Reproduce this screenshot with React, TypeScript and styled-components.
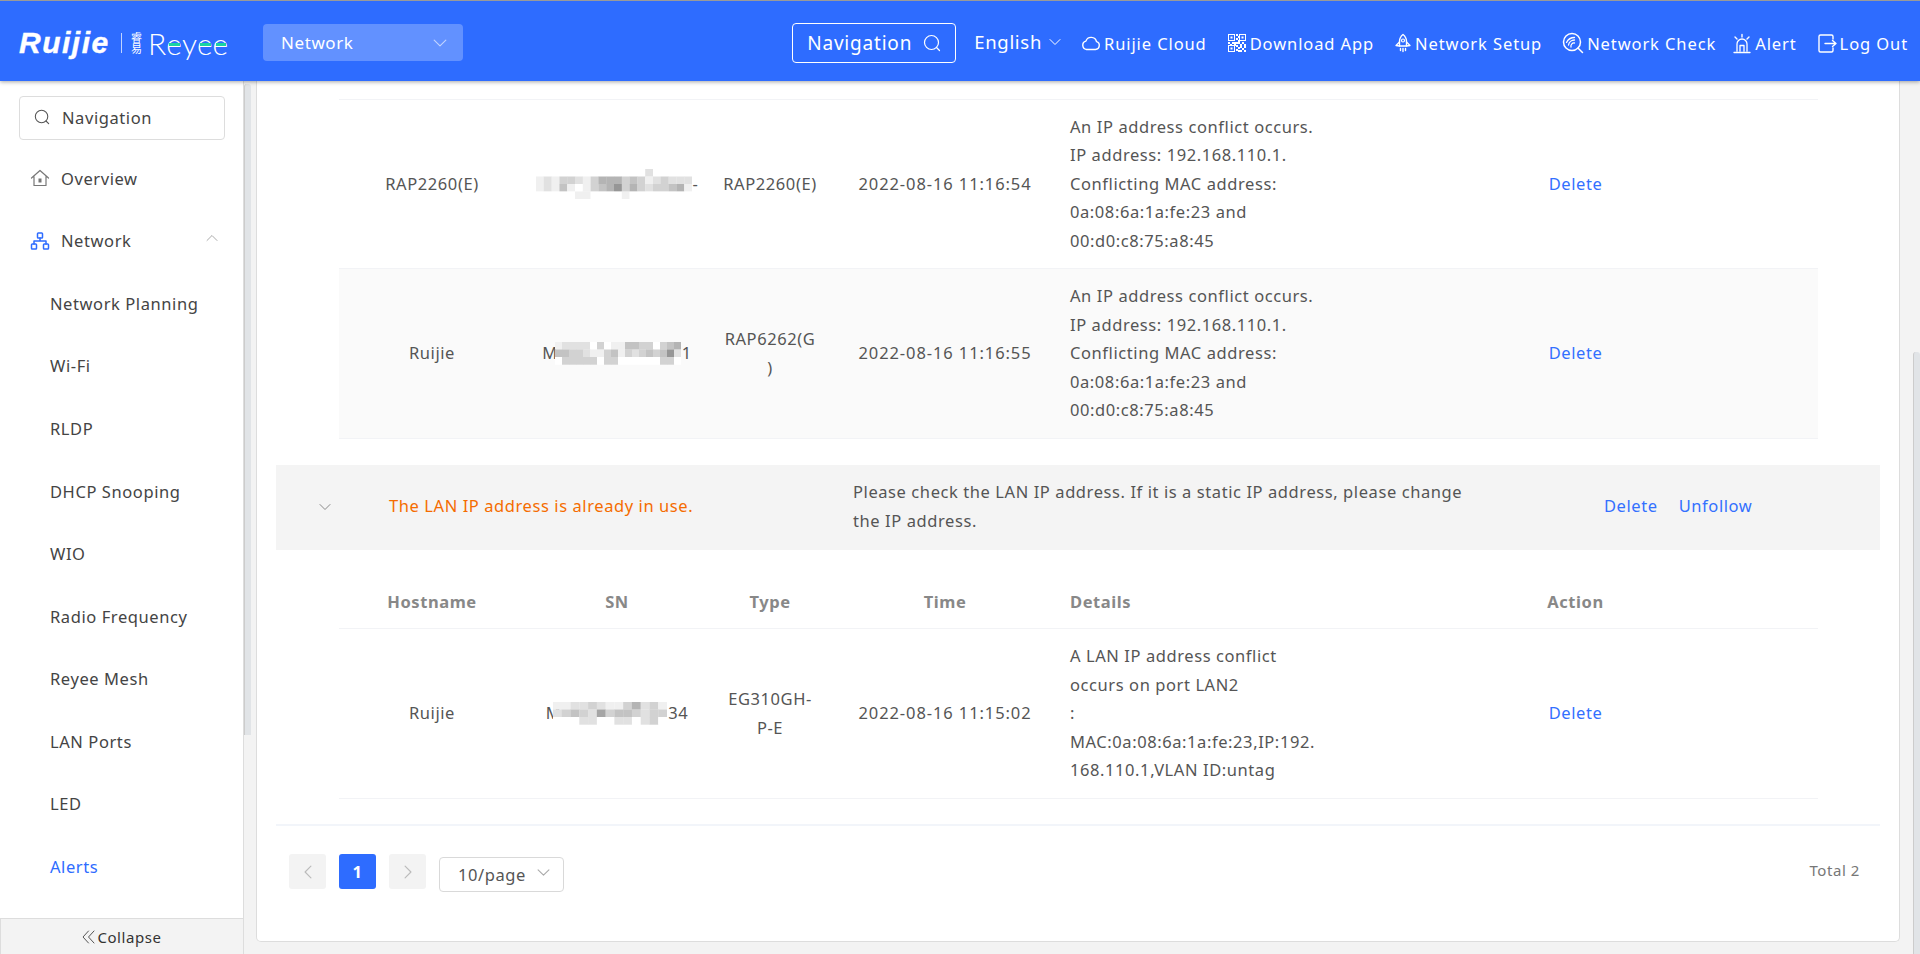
import React from 'react';
import styled, { createGlobalStyle } from 'styled-components';

const GlobalStyle = createGlobalStyle`
  html, body {
    margin: 0;
    height: 100%;
    overflow: hidden;
    background: #f3f3f3;
    font-family: "Noto Sans", "Noto Sans CJK SC", sans-serif;
    font-size: 16.5px;
    letter-spacing: 0.58px;
    color: #555;
  }
  * { box-sizing: border-box; }
`;

const Page = styled.div`
  height: 954px;
  display: flex;
  flex-direction: column;
`;

const Header = styled.header`
  height: 81px;
  flex: none;
  border-top: 1px solid #9a9a9a;
  background: #2e6cff;
  box-shadow: 0 1px 4px rgba(0, 0, 0, 0.35);
  display: flex;
  align-items: center;
  padding: 0 12px 0 19px;
  color: #fff;
  position: relative;
  z-index: 2;
`;

const Logo = styled.div`
  width: 206px;
  display: flex;
  align-items: center;
  flex: none;
  margin-top: 3px;
`;

const LogoRuijie = styled.span`
  flex: none;
  font-family: "Liberation Sans", sans-serif;
  font-weight: 700;
  font-style: italic;
  font-size: 30px;
  letter-spacing: 1.5px;
  line-height: 30px;
  width: 102px;
  -webkit-text-stroke: 0.4px #fff;
`;

const LogoSep = styled.span`
  flex: none;
  width: 1px;
  height: 20px;
  background: rgba(255, 255, 255, 0.7);
  margin-right: 9px;
`;

const LogoCjk = styled.span`
  flex: none;
  display: flex;
  flex-direction: column;
  font-family: "Noto Sans CJK SC", sans-serif;
  font-size: 11px;
  line-height: 11px;
  letter-spacing: 0;
  width: 17px;
`;

const LogoReyee = styled.span`
  flex: none;
  display: flex;
  font-family: "Lato", sans-serif;
  font-weight: 300;
  font-size: 30px;
  line-height: 30px;
  letter-spacing: 0;
`;

const LogoE = styled.span`
  position: relative;
  &::after {
    content: '';
    position: absolute;
    left: 3px;
    right: 2px;
    top: 15px;
    height: 3px;
    background: #19d3a2;
  }
`;

const ModeSelect = styled.div`
  width: 200px;
  height: 37px;
  margin: 3px 0 0 38px;
  padding: 0 16px 0 18px;
  border-radius: 4px;
  background: rgba(255, 255, 255, 0.25);
  display: flex;
  align-items: center;
  justify-content: space-between;
  font-size: 17px;
  flex: none;
`;

const HeaderRight = styled.div`
  margin-left: auto;
  margin-top: 3px;
  display: flex;
  align-items: center;
`;

const NavSearch = styled.div`
  width: 164px;
  height: 40px;
  border: 1px solid #fff;
  border-radius: 4px;
  display: flex;
  align-items: center;
  justify-content: space-between;
  padding: 0 14px;
  font-size: 19px;
  letter-spacing: 0.8px;
  margin-right: 18px;
`;

const Lang = styled.div`
  display: flex;
  align-items: center;
  gap: 7px;
  font-size: 18.5px;
  letter-spacing: 0.7px;
  margin: -2px 20px 0 0;
`;

const HeaderLink = styled.div<{ $gap?: number }>`
  display: flex;
  align-items: center;
  gap: 3px;
  letter-spacing: 0.9px;
  margin-top: 1px;
  margin-right: ${p => p.$gap ?? 20}px;
  white-space: nowrap;
`;

const Body = styled.div`
  flex: 1;
  min-height: 0;
  display: flex;
`;

const Sidebar = styled.aside`
  width: 244px;
  flex: none;
  background: #fff;
  border-right: 1px solid #ddd;
  display: flex;
  flex-direction: column;
`;

const SideSearch = styled.div`
  margin: 15px 18px 0 19px;
  height: 44px;
  padding-bottom: 2px;
  border: 1px solid #ddd;
  border-radius: 4px;
  display: flex;
  align-items: center;
  gap: 12px;
  padding-left: 14px;
  color: #444;
`;

const SideNav = styled.nav`
  flex: 1;
  padding-top: 7px;
`;

const SideItem = styled.div<{ $sub?: boolean; $active?: boolean }>`
  height: 62.55px;
  display: flex;
  align-items: center;
  gap: 11px;
  padding-left: ${p => (p.$sub ? 50 : 30)}px;
  padding-right: 25px;
  color: ${p => (p.$active ? '#2e6cff' : '#444')};
`;

const ChevronEnd = styled.span`
  margin-left: auto;
  display: flex;
  margin-top: -5px;
`;

const Collapse = styled.div`
  height: 36px;
  flex: none;
  background: #f3f3f3;
  border-top: 1px solid #ddd;
  border-left: 1px solid #ddd;
  display: flex;
  align-items: center;
  justify-content: center;
  gap: 2px;
  color: #333;
  font-size: 15px;
`;

const ScrollTrack = styled.div<{ $top: number; $bottom: number }>`
  width: 7px;
  flex: none;
  padding-top: ${p => p.$top}px;
  padding-bottom: ${p => p.$bottom}px;
  &::before {
    content: '';
    display: block;
    height: 100%;
    background: #e1e4e7;
    border-left: 1px solid #ccc;
    border-top-left-radius: 3px;
    border-top-right-radius: 3px;
  }
`;

const SideGutter = styled.div`
  width: 5px;
  flex: none;
`;

const Main = styled.main`
  flex: 1;
  min-width: 0;
  display: flex;
  gap: 13px;
`;

const Card = styled.section`
  flex: 1;
  margin-bottom: 12px;
  background: #fff;
  border: 1px solid #ddd;
  border-top: 0;
  border-radius: 0 0 5px 5px;
  padding: 18px 19px 0 19px;
`;

const SubTable = styled.div`
  margin: 0 62px 0 63px;
`;

const cols = '186px 184px 122px 228px 274px 1fr';

const Row = styled.div<{ $alt?: boolean; $first?: boolean }>`
  display: grid;
  grid-template-columns: ${cols};
  height: 170px;
  align-items: center;
  text-align: center;
  line-height: 28.5px;
  background: ${p => (p.$alt ? '#fafafa' : '#fff')};
  border-bottom: 1px solid #f2f3f6;
  border-top: ${p => (p.$first ? '1px solid #f2f3f6' : '0')};
`;

const HeadRow = styled.div`
  display: grid;
  grid-template-columns: ${cols};
  height: 79px;
  align-items: end;
  padding-bottom: 12px;
  text-align: center;
  line-height: 28px;
  font-weight: 700;
  color: #888;
  border-bottom: 1px solid #f2f3f6;
`;

const DetailCell = styled.div`
  text-align: left;
  padding-left: 11px;
`;

const TimeCell = styled.div`
  letter-spacing: 0.9px;
  white-space: nowrap;
`;

const SnCell = styled.div`
  display: flex;
  align-items: center;
  justify-content: center;
  height: 32px;
`;

const SnMark = styled.svg<{ $overlap: number }>`
  flex: none;
  margin: 0 1px 0 ${p => -p.$overlap}px;
`;

const Link = styled.a`
  color: #3370ff;
  cursor: pointer;
`;

const Panel = styled.div`
  margin-top: 26px;
  height: 85px;
  padding-bottom: 2px;
  background: #f4f4f4;
  display: grid;
  grid-template-columns: 113px 464px 1fr 276px;
  align-items: center;
  line-height: 28.5px;
`;

const PanelChevron = styled.div`
  padding-left: 43px;
  display: flex;
  color: #888;
`;

const PanelTitle = styled.div`
  color: #f56c00;
  white-space: nowrap;
`;

const PanelActions = styled.div`
  display: flex;
  gap: 21px;
`;

const PanelEnd = styled.div`
  border-bottom: 2px solid #f2f5fa;
  height: 27px;
`;

const Pager = styled.div`
  display: flex;
  padding-top: 28px;
  padding-left: 13px;
  align-items: flex-start;
  gap: 13px;
  padding-right: 20px;
`;

const PageBtn = styled.div<{ $active?: boolean }>`
  width: 37px;
  height: 35px;
  border-radius: 3px;
  display: flex;
  align-items: center;
  justify-content: center;
  background: ${p => (p.$active ? '#2e6cff' : '#f3f3f3')};
  color: #fff;
  font-weight: 700;
`;

const PageSize = styled.div`
  width: 125px;
  height: 35px;
  margin-top: 3px;
  border: 1px solid #d9d9d9;
  border-radius: 4px;
  display: flex;
  align-items: center;
  padding: 0 13px 0 18px;
`;

const Total = styled.div`
  margin-left: auto;
  color: #777;
  font-size: 15px;
  line-height: 33px;
`;

const line = { fill: 'none', stroke: 'currentColor', strokeLinecap: 'round', strokeLinejoin: 'round' } as const;

const SearchIcon = ({ size = 18, color = 'currentColor' }: { size?: number; color?: string }) => (
  <svg width={size} height={size} viewBox="0 0 18 18" color={color}>
    <circle cx="8.5" cy="8.5" r="7" strokeWidth="1.2" {...line} />
    <path d="M13.5 13.5L16.5 16.5" strokeWidth="1.2" {...line} />
  </svg>
);

const Chevron = ({ up, left, right, size = 12, color = 'currentColor' }: { up?: boolean; left?: boolean; right?: boolean; size?: number; color?: string }) => {
  const d = up ? 'M1 8.5L6 3.5L11 8.5' : left ? 'M8.5 1L3.5 6L8.5 11' : right ? 'M3.5 1L8.5 6L3.5 11' : 'M1 3.5L6 8.5L11 3.5';
  return (
    <svg width={size} height={size} viewBox="0 0 12 12" color={color}>
      <path d={d} strokeWidth="1" {...line} />
    </svg>
  );
};

const CloudIcon = () => (
  <svg width="20" height="20" viewBox="0 0 20 20">
    <path d="M5.5 16.5h9a4 4 0 0 0 1-7.8a5.5 5.5 0 0 0-10.6-.6a4.3 4.3 0 0 0 .6 8.4z" strokeWidth="1.4" {...line} />
  </svg>
);

const QR_DOTS = [
  [9, 1], [11, 3], [9, 5], [11, 7], [1, 9], [3, 11], [5, 9], [7, 11], [9, 9], [11, 9], [13, 11], [15, 9], [17, 11],
  [9, 12], [11, 14], [13, 13], [15, 15], [17, 13], [9, 16], [11, 17], [13, 17], [17, 17], [7, 9],
];

const QrIcon = () => (
  <svg width="20" height="20" viewBox="0 0 20 20" fill="#fff">
    {[[1, 1], [12, 1], [1, 12]].map(([x, y]) => (
      <g key={`${x}-${y}`}>
        <rect x={x + 0.5} y={y + 0.5} width="6" height="6" fill="none" stroke="#fff" />
        <rect x={x + 2.5} y={y + 2.5} width="2" height="2" />
      </g>
    ))}
    {QR_DOTS.map(([x, y]) => (
      <rect key={`${x}:${y}`} x={x} y={y} width="2" height="2" />
    ))}
  </svg>
);

const RocketIcon = () => (
  <svg width="18" height="20" viewBox="0 0 18 20">
    <path d="M9 1.5C6.5 3.5 5.5 6 5.5 8.5V13h7V8.5C12.5 6 11.5 3.5 9 1.5z" strokeWidth="1.4" {...line} />
    <circle cx="9" cy="7.5" r="1.5" strokeWidth="1.2" {...line} />
    <path d="M5.5 9L2 12.5L5.5 13M12.5 9L16 12.5L12.5 13" strokeWidth="1.3" {...line} />
    <path d="M6.5 15.5v2M9 15.5v3M11.5 15.5v2" strokeWidth="1.4" {...line} />
  </svg>
);

const NetCheckIcon = () => (
  <svg width="22" height="22" viewBox="0 0 22 22">
    <circle cx="10" cy="10" r="8.5" strokeWidth="1.5" {...line} />
    <path d="M16 16l4.5 4.5" strokeWidth="1.5" {...line} />
    <path d="M4.5 10.5a9 9 0 0 1 8-5M6.5 13a6 6 0 0 1 6-5M9 15a3.2 3.2 0 0 1 3.5-4" strokeWidth="1.3" {...line} />
  </svg>
);

const AlertIcon = () => (
  <svg width="20" height="21" viewBox="0 0 20 21">
    <path d="M5 18v-7a5 5 0 0 1 10 0v7M2 19.5h16M8 18v-5.5h4V18" strokeWidth="1.3" {...line} />
    <path d="M10 1.5v2.5M3 4l2 2M17 4l-2 2" strokeWidth="1.4" {...line} />
  </svg>
);

const LogoutIcon = () => (
  <svg width="20" height="21" viewBox="0 0 20 21">
    <path d="M16 6V3.5a1.5 1.5 0 0 0-1.5-1.5h-11A1.5 1.5 0 0 0 2 3.5v14A1.5 1.5 0 0 0 3.5 19h11a1.5 1.5 0 0 0 1.5-1.5V15" strokeWidth="1.4" {...line} />
    <path d="M8 10.5h11M15.5 7.5l3.5 3l-3.5 3" strokeWidth="1.4" {...line} />
  </svg>
);

const HomeIcon = () => (
  <svg width="20" height="20" viewBox="0 0 20 20" color="#777">
    <path d="M1.5 10L10 2.5L18.5 10M4 8.5V17.5H16V8.5" strokeWidth="1.2" {...line} />
    <rect x="8.5" y="10.5" width="3" height="4" fill="#777" />
  </svg>
);

const NetworkIcon = () => (
  <svg width="20" height="20" viewBox="0 0 20 20" color="#2e6cff">
    <rect x="7.5" y="2" width="5" height="5" rx="0.8" strokeWidth="1.5" {...line} />
    <rect x="1.5" y="13" width="5" height="5" rx="0.8" strokeWidth="1.5" {...line} />
    <rect x="13.5" y="13" width="5" height="5" rx="0.8" strokeWidth="1.5" {...line} />
    <path d="M10 7v3M4 13v-3h12v3" strokeWidth="1.5" {...line} />
  </svg>
);

const DoubleLeft = () => (
  <svg width="13" height="14" viewBox="0 0 13 14" color="#555">
    <path d="M6.5 1L1 7l5.5 6M12 1L6.5 7L12 13" strokeWidth="1" {...line} />
  </svg>
);

// the serial numbers are pixelated in the picture, one digit per block
const Mosaic = ({ blocks, width, overlap = 0 }: { blocks: string[]; width: number; overlap?: number }) => {
  const size = width / blocks[0].length;
  return (
    <SnMark $overlap={overlap} width={width} height={blocks.length * 7.5}>
      {blocks.flatMap((rowData, y) =>
        rowData.split('').map((c, x) => {
          const g = 255 - Number(c) * 15;
          return <rect key={`${x}-${y}`} x={x * size} y={y * 7.5} width={size + 0.2} height="7.7" fill={`rgb(${g},${g},${g})`} />;
        })
      )}
    </SnMark>
  );
};

const SN_A = [
  '00000000000000200000',
  '12133213555343123222',
  '12141013457353233451',
  '00000110000100000000',
];
const SN_B = [
  '122220301144330345',
  '443321134132343472',
  '033333033000000330',
];
const SN_C = [
  '1122321135231',
  '2343263443233',
  '0002200220230',
];

const Details = ({ lines }: { lines: string[] }) => (
  <DetailCell>
    {lines.map(l => (
      <div key={l}>{l}</div>
    ))}
  </DetailCell>
);

const conflict = [
  'An IP address conflict occurs.',
  'IP address: 192.168.110.1.',
  'Conflicting MAC address:',
  '0a:08:6a:1a:fe:23 and',
  '00:d0:c8:75:a8:45',
];

const menu = ['Network Planning', 'Wi-Fi', 'RLDP', 'DHCP Snooping', 'WIO', 'Radio Frequency', 'Reyee Mesh', 'LAN Ports', 'LED'];

export default function App() {
  return (
    <Page>
      <GlobalStyle />
      <Header>
        <Logo>
          <LogoRuijie>Ruijie</LogoRuijie>
          <LogoSep />
          <LogoCjk><span>睿</span><span>易</span></LogoCjk>
          <LogoReyee>R<LogoE>e</LogoE>y<LogoE>e</LogoE><LogoE>e</LogoE></LogoReyee>
        </Logo>
        <ModeSelect>
          Network
          <Chevron size={14} color="rgba(255,255,255,.6)" />
        </ModeSelect>
        <HeaderRight>
          <NavSearch>Navigation<SearchIcon /></NavSearch>
          <Lang>English<Chevron size={12} /></Lang>
          <HeaderLink><CloudIcon />Ruijie Cloud</HeaderLink>
          <HeaderLink><QrIcon />Download App</HeaderLink>
          <HeaderLink><RocketIcon />Network Setup</HeaderLink>
          <HeaderLink $gap={16}><NetCheckIcon />Network Check</HeaderLink>
          <HeaderLink><AlertIcon />Alert</HeaderLink>
          <HeaderLink $gap={0}><LogoutIcon />Log Out</HeaderLink>
        </HeaderRight>
      </Header>
      <Body>
        <Sidebar>
          <SideSearch><SearchIcon size={16} color="#555" />Navigation</SideSearch>
          <SideNav>
            <SideItem><HomeIcon />Overview</SideItem>
            <SideItem><NetworkIcon />Network<ChevronEnd><Chevron up color="#aaa" /></ChevronEnd></SideItem>
            {menu.map(m => (
              <SideItem $sub key={m}>{m}</SideItem>
            ))}
            <SideItem $sub $active>Alerts</SideItem>
          </SideNav>
          <Collapse><DoubleLeft />Collapse</Collapse>
        </Sidebar>
        <ScrollTrack $top={3} $bottom={219} />
        <SideGutter />
        <Main>
          <Card>
            <SubTable>
              <Row $first>
                <div>RAP2260(E)</div>
                <SnCell><Mosaic blocks={SN_A} width={156} />-</SnCell>
                <div>RAP2260(E)</div>
                <TimeCell>2022-08-16 11:16:54</TimeCell>
                <Details lines={conflict} />
                <div><Link>Delete</Link></div>
              </Row>
              <Row $alt>
                <div>Ruijie</div>
                <SnCell>M<Mosaic blocks={SN_B} width={126} overlap={3} />1</SnCell>
                <div>RAP6262(G<br />)</div>
                <TimeCell>2022-08-16 11:16:55</TimeCell>
                <Details lines={conflict} />
                <div><Link>Delete</Link></div>
              </Row>
            </SubTable>
            <Panel>
              <PanelChevron><Chevron size={12} /></PanelChevron>
              <PanelTitle>The LAN IP address is already in use.</PanelTitle>
              <div>Please check the LAN IP address. If it is a static IP address, please change<br />the IP address.</div>
              <PanelActions><Link>Delete</Link><Link>Unfollow</Link></PanelActions>
            </Panel>
            <SubTable>
              <HeadRow>
                <div>Hostname</div>
                <div>SN</div>
                <div>Type</div>
                <div>Time</div>
                <DetailCell>Details</DetailCell>
                <div>Action</div>
              </HeadRow>
              <Row>
                <div>Ruijie</div>
                <SnCell>M<Mosaic blocks={SN_C} width={114} overlap={8} />34</SnCell>
                <div>EG310GH-<br />P-E</div>
                <TimeCell>2022-08-16 11:15:02</TimeCell>
                <Details lines={['A LAN IP address conflict', 'occurs on port LAN2', ':', 'MAC:0a:08:6a:1a:fe:23,IP:192.', '168.110.1,VLAN ID:untag']} />
                <div><Link>Delete</Link></div>
              </Row>
            </SubTable>
            <PanelEnd />
            <Pager>
              <PageBtn><Chevron left size={14} color="#bbb" /></PageBtn>
              <PageBtn $active>1</PageBtn>
              <PageBtn><Chevron right size={14} color="#bbb" /></PageBtn>
              <PageSize>10/page<ChevronEnd><Chevron size={13} color="#aaa" /></ChevronEnd></PageSize>
              <Total>Total 2</Total>
            </Pager>
          </Card>
          <ScrollTrack $top={271} $bottom={0} />
        </Main>
      </Body>
    </Page>
  );
}
